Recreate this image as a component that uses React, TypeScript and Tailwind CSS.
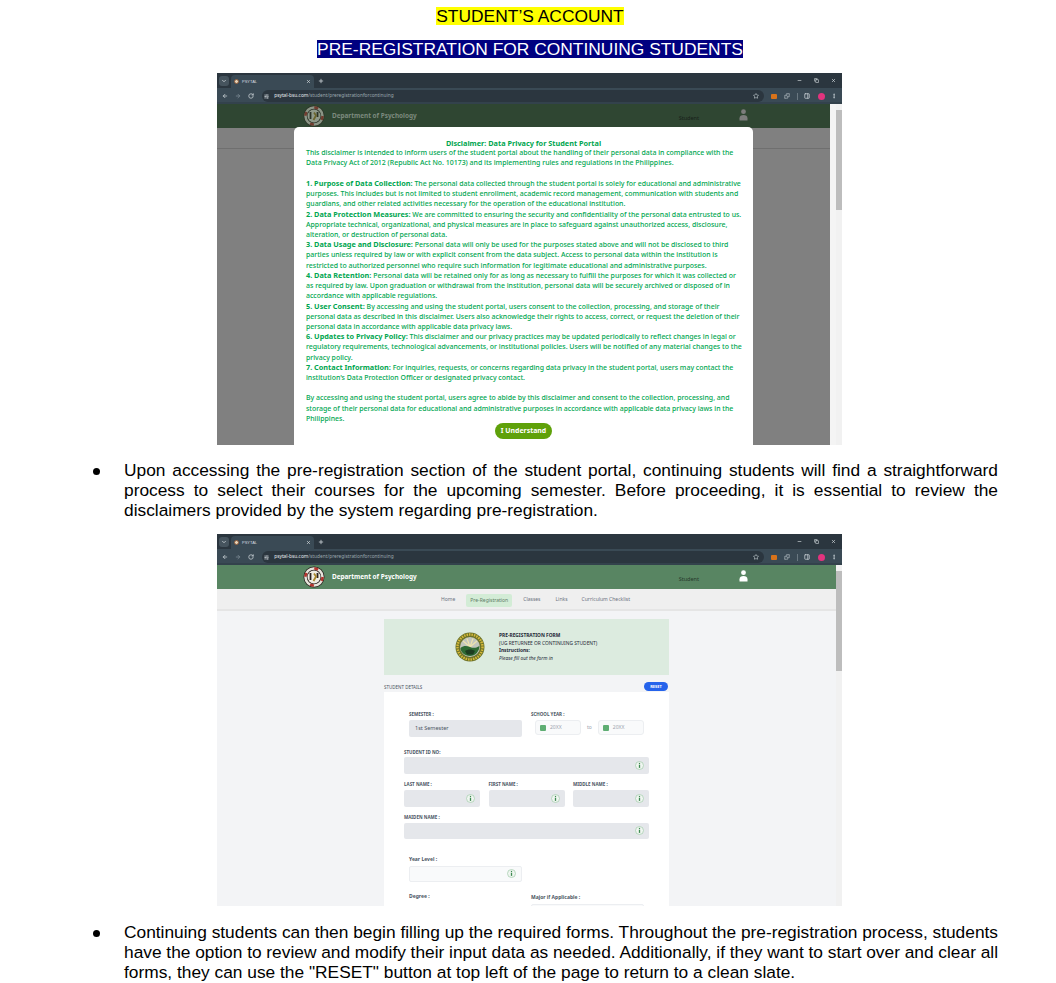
import { ArrowLeft, ArrowRight, ChevronDown, Copy, Minus, MoreVertical, Plus, RotateCw, SlidersHorizontal, Star, X, Puzzle, PanelRight } from "lucide-react"

// Small round department seal used in the site header
function DeptSeal({ dim }: { dim?: boolean }) {
  return (
    <svg width="22" height="22" viewBox="0 0 22 22" className={dim ? "opacity-50" : ""}>
      <circle cx="11" cy="11" r="10.500" fill="#2b2320" />
      <circle cx="11" cy="11" r="8.500" fill="none" stroke="#e6e3da" strokeWidth="2.500" />
      <circle cx="11" cy="11" r="8.500" fill="none" stroke="#b3332c" strokeWidth="2.500" strokeDasharray="4 9.350" />
      <circle cx="11" cy="11" r="6.500" fill="#efece2" />
      <path d="M7.500 7v7M14.500 7v5" stroke="#2b2320" strokeWidth="1.800" fill="none" />
      <path d="M11 7.500l2 3-2.500 4.500" stroke="#a8862c" strokeWidth="1.800" fill="none" />
    </svg>
  )
}

// University seal on the pre-registration banner
function UniSeal() {
  return (
    <svg width="30" height="30" viewBox="0 0 30 30">
      <circle cx="15" cy="15" r="14.500" fill="#6c7228" />
      <circle cx="15" cy="15" r="12.500" fill="none" stroke="#d6b93a" strokeWidth="2.400" strokeDasharray="1.500 1" />
      <circle cx="15" cy="15" r="10" fill="#c2c6bd" />
      <path d="M15 15L8 9M15 15L12 6.500M15 15l3-8.500M15 15l7-6" stroke="#eee3ae" strokeWidth="1.200" />
      <path d="M5.500 16c3-2.500 6-2.500 9.500-1s6 1 9.500-1c0 5-4 10-9.500 10s-9.500-4-9.500-8z" fill="#2f6b33" />
      <path d="M10 19c3-2 7-2 10 0l-2 3.500h-6z" fill="#1d3c20" />
    </svg>
  )
}

function BrowserBar() {
  return (
    <div className="shrink-0">
      <div className="h-[15px] bg-[#2b363f] flex items-center pl-[2px] pr-[6px] text-[#d7dde1]">
        <div className="w-[10px] h-[10px] rounded-[3px] bg-[#46545e] flex items-center justify-center">
          <ChevronDown size={6} strokeWidth={3} />
        </div>
        <div className="ml-[2px] h-[13px] mt-[2px] w-[83px] bg-[#3a4a55] rounded-t-[4px] flex items-center pl-[3px] pr-[3px]">
          <div className="w-[5px] h-[5px] rounded-full bg-[#e5d3b8] border border-[#8d5a3a]" />
          <span className="ml-[3px] text-[4px] flex-1">PSYTAL</span>
          <X size={5} strokeWidth={3} />
        </div>
        <Plus size={6} strokeWidth={3} className="ml-[4px]" />
        <div className="flex-1" />
        <Minus size={5} strokeWidth={3} />
        <Copy size={5} strokeWidth={3} className="ml-[12px]" />
        <X size={5} strokeWidth={3} className="ml-[12px]" />
      </div>
      <div className="h-[16px] bg-[#3a4a55] shadow-[inset_0_-2px_0_#33424c] flex items-center pl-[5px] pr-[5px] text-[#c9d1d6]">
        <ArrowLeft size={6} strokeWidth={3} />
        <ArrowRight size={6} strokeWidth={3} className="ml-[7px] text-[#7f8c95]" />
        <RotateCw size={6} strokeWidth={3} className="ml-[7px]" />
        <div className="ml-[7.700px] h-[12px] flex-1 rounded-full bg-[#2b363f] flex items-center pl-[2.500px] pr-[5px]">
          <SlidersHorizontal size={5} strokeWidth={3} />
          <span className="ml-[5px] text-[4.800px] font-['Noto_Sans',sans-serif] text-[#e8ecef]">psytal-bsu.com<span className="text-[#9aa6ae]">/student/preregistrationforcontinuing</span></span>
          <div className="flex-1" />
          <Star size={6} strokeWidth={2.500} />
        </div>
        <div className="ml-[7px] w-[6px] h-[5px] rounded-[1px] bg-[#d9731a]" />
        <Puzzle size={6} strokeWidth={2.500} className="ml-[7px]" />
        <div className="ml-[6.500px] w-px h-[7px] bg-[#6a7881]" />
        <PanelRight size={6} strokeWidth={3} className="ml-[6.500px]" />
        <div className="ml-[7.500px] w-[7px] h-[7px] rounded-full bg-[#e3337e]" />
        <MoreVertical size={6} strokeWidth={3} className="ml-[6.500px]" />
      </div>
    </div>
  )
}

function PersonIcon({ color }: { color: string }) {
  return (
    <svg width="9" height="12" viewBox="0 0 9 12" fill={color}>
      <circle cx="4.500" cy="2.700" r="2.400" />
      <path d="M0.500 11.500V9.300c0-2 1.800-3.200 4-3.200s4 1.200 4 3.200v2.200z" />
    </svg>
  )
}

function SiteHeader({ dim }: { dim?: boolean }) {
  return (
    <div className={`h-[24px] flex items-center font-['Noto_Sans',sans-serif] ${dim ? "bg-[#2f4632]" : "bg-[#588562]"}`}>
      <div className="ml-[86px]"><DeptSeal dim={dim} /></div>
      <span className={`ml-[7px] text-[6.400px] font-bold ${dim ? "text-[#7c8a7e]" : "text-white"}`}>Department of Psychology</span>
      <span className={`ml-[262px] mt-[4px] text-[5.500px] ${dim ? "text-[#17201a]" : "text-[#26382b]"}`}>Student</span>
      <div className="ml-[40px] -mt-[2px]"><PersonIcon color={dim ? "#7d7d7d" : "#ffffff"} /></div>
    </div>
  )
}

const disclaimer: { bold?: string; text: string }[] = [
  { text: "This disclaimer is intended to inform users of the student portal about the handling of their personal data in compliance with the" },
  { text: "Data Privacy Act of 2012 (Republic Act No. 10173) and its implementing rules and regulations in the Philippines." },
  { text: "\u00a0" },
  { bold: "1. Purpose of Data Collection:", text: " The personal data collected through the student portal is solely for educational and administrative" },
  { text: "purposes. This includes but is not limited to student enrollment, academic record management, communication with students and" },
  { text: "guardians, and other related activities necessary for the operation of the educational institution." },
  { bold: "2. Data Protection Measures:", text: " We are committed to ensuring the security and confidentiality of the personal data entrusted to us." },
  { text: "Appropriate technical, organizational, and physical measures are in place to safeguard against unauthorized access, disclosure," },
  { text: "alteration, or destruction of personal data." },
  { bold: "3. Data Usage and Disclosure:", text: " Personal data will only be used for the purposes stated above and will not be disclosed to third" },
  { text: "parties unless required by law or with explicit consent from the data subject. Access to personal data within the institution is" },
  { text: "restricted to authorized personnel who require such information for legitimate educational and administrative purposes." },
  { bold: "4. Data Retention:", text: " Personal data will be retained only for as long as necessary to fulfill the purposes for which it was collected or" },
  { text: "as required by law. Upon graduation or withdrawal from the institution, personal data will be securely archived or disposed of in" },
  { text: "accordance with applicable regulations." },
  { bold: "5. User Consent:", text: " By accessing and using the student portal, users consent to the collection, processing, and storage of their" },
  { text: "personal data as described in this disclaimer. Users also acknowledge their rights to access, correct, or request the deletion of their" },
  { text: "personal data in accordance with applicable data privacy laws." },
  { bold: "6. Updates to Privacy Policy:", text: " This disclaimer and our privacy practices may be updated periodically to reflect changes in legal or" },
  { text: "regulatory requirements, technological advancements, or institutional policies. Users will be notified of any material changes to the" },
  { text: "privacy policy." },
  { bold: "7. Contact Information:", text: " For inquiries, requests, or concerns regarding data privacy in the student portal, users may contact the" },
  { text: "institution's Data Protection Officer or designated privacy contact." },
  { text: "\u00a0" },
  { text: "By accessing and using the student portal, users agree to abide by this disclaimer and consent to the collection, processing, and" },
  { text: "storage of their personal data for educational and administrative purposes in accordance with applicable data privacy laws in the" },
  { text: "Philippines." },
]

function DisclaimerShot() {
  return (
    <div className="ml-[217px] w-[625px] h-[372px] flex flex-col overflow-hidden">
      <BrowserBar />
      <div className="relative flex-1 bg-[#808080] overflow-hidden">
        <SiteHeader dim />
        <div className="h-[21px] border-b border-[#6f6f6f]" />
        <div className="absolute right-0 top-0 bottom-0 w-[12px] bg-[#f4f4f4] flex justify-end">
          <div className="w-[6px] h-full bg-[#f1f1f1]">
            <div className="mt-[6px] h-[100px] bg-[#bdbdbd]" />
          </div>
        </div>
        <div className="absolute left-[77px] top-[23px] w-[459px] h-[400px] bg-white rounded-[5px] pt-[11px] pl-[12px] font-['Noto_Sans',sans-serif] text-[6.940px] leading-[10.220px] font-[500] text-[#00a650]">
          <div className="text-center text-[7.300px] font-bold pr-[12px]">Disclaimer: Data Privacy for Student Portal</div>
          {disclaimer.map((line, i) => (
            <div key={i} className="whitespace-nowrap h-[10.220px]">
              {line.bold && <b className="text-[7.300px] leading-none font-bold">{line.bold}</b>}
              {line.text}
            </div>
          ))}
          <div className="-mt-[1px] pr-[12px] flex justify-center">
            <div className="w-[57px] h-[16px] rounded-full bg-[#5fa10a] text-white font-bold flex items-center justify-center">I Understand</div>
          </div>
        </div>
      </div>
    </div>
  )
}

function InfoDot() {
  return (
    <svg width="9" height="9" viewBox="0 0 9 9" className="shrink-0">
      <circle cx="4.500" cy="4.500" r="4" fill="#f0f6f1" stroke="#a9cfb3" strokeWidth="0.800" />
      <circle cx="4.500" cy="2.400" r="0.700" fill="#3f8a52" />
      <path d="M4.500 3.700v3.200" stroke="#3f8a52" strokeWidth="1.300" />
    </svg>
  )
}

function Field({ className, filled = true }: { className?: string; filled?: boolean }) {
  return (
    <div className={`flex items-center justify-end pr-[5px] rounded-[2px] ${filled ? "bg-[#e5e7eb] h-[16.700px]" : "bg-[#f9fafb] border border-[#eceef1] h-[15.700px]"} ${className ?? ""}`}>
      <InfoDot />
    </div>
  )
}

function Label({ children, className }: { children: React.ReactNode; className?: string }) {
  return <div className={`text-[4.500px] leading-[6px] font-bold text-[#4b5563] ${className ?? ""}`}>{children}</div>
}

function YearInput() {
  return (
    <div className="w-[46px] h-[15.500px] rounded-[3px] bg-[#f9fafb] border border-[#eceef1] flex items-center pl-[4px]">
      <div className="w-[6px] h-[6px] rounded-[1px] bg-[#5fae73]" />
      <span className="ml-[4px] text-[5px] text-[#9ca3af]">20XX</span>
    </div>
  )
}

function FormShot() {
  return (
    <div className="ml-[217px] w-[625px] h-[372px] flex flex-col overflow-hidden">
      <BrowserBar />
      <div className="relative flex-1 bg-[#f3f4f6] overflow-hidden font-['Noto_Sans',sans-serif]">
        <SiteHeader />
        <div className="h-[22px] bg-[#efefef] border-b-2 border-[#e5e5e5] flex items-center pt-[2px] pl-[224px] text-[5px] text-[#6b7280]">
          <span>Home</span>
          <span className="ml-[11px] w-[46px] h-[13px] leading-[13px] text-center rounded-[2px] bg-[#d3ecd6] text-[#5f7d66]">Pre-Registration</span>
          <span className="ml-[11px]">Classes</span>
          <span className="ml-[15px]">Links</span>
          <span className="ml-[14px]">Curriculum Checklist</span>
        </div>
        <div className="absolute right-0 top-0 bottom-0 w-[6px] bg-[#f1f1f1]">
          <div className="mt-[6px] h-[100px] bg-[#bdbdbd]" />
        </div>

        <div className="ml-[167px] w-[285px] mt-[8px]">
          <div className="h-[56px] bg-[#dcebdf] flex items-center pl-[71px]">
            <UniSeal />
            <div className="ml-[14px] text-[4.850px] leading-[7.500px] text-[#1f2937]">
              <div className="font-bold">PRE-REGISTRATION FORM</div>
              <div>(UG RETURNEE OR CONTINUING STUDENT)</div>
              <div className="font-bold">Instructions:</div>
              <div className="italic">Please fill out the form in</div>
            </div>
          </div>
          <div className="h-[17px] flex items-end justify-between pr-[1px] pb-[1px]">
            <span className="text-[4.500px] text-[#4b5563]">STUDENT DETAILS</span>
            <span className="w-[24px] h-[9px] rounded-full bg-[#2563eb] text-white text-[4px] font-bold flex items-center justify-center">RESET</span>
          </div>
          <div className="bg-white h-[240px] pt-[19.300px] px-[20px]">
            <div className="flex pl-[5px]">
              <div className="w-[113px]">
                <Label>SEMESTER :</Label>
                <div className="mt-[2.700px] h-[16.700px] bg-[#e5e7eb] rounded-[2px] flex items-center pl-[6px] text-[5.500px] text-[#4b5563]">1st Semester</div>
              </div>
              <div className="ml-[9px]">
                <Label>SCHOOL YEAR :</Label>
                <div className="mt-[2.700px] ml-[4px] flex items-center">
                  <YearInput />
                  <span className="mx-[6px] text-[5px] text-[#9ca3af]">to</span>
                  <YearInput />
                </div>
              </div>
            </div>
            <Label className="mt-[12px]">STUDENT ID NO:</Label>
            <Field className="mt-[2.600px]" />
            <div className="mt-[7.300px] grid grid-cols-3 gap-x-[8.500px]">
              <div><Label>LAST NAME :</Label><Field className="mt-[2.700px]" /></div>
              <div><Label>FIRST NAME :</Label><Field className="mt-[2.700px]" /></div>
              <div><Label>MIDDLE NAME :</Label><Field className="mt-[2.700px]" /></div>
            </div>
            <Label className="mt-[7.300px]">MAIDEN NAME :</Label>
            <Field className="mt-[2.700px]" />
            <div className="pl-[5px] mt-[16.700px]">
              <div className="text-[5px] leading-[6px] font-bold text-[#4b5563]">Year Level :</div>
              <Field filled={false} className="mt-[4px] w-[113px]" />
              <div className="mt-[11px] flex">
                <div className="w-[122px] text-[5px] leading-[6px] font-bold text-[#4b5563]">Degree :</div>
                <div className="mt-[1px] text-[5px] leading-[6px] font-bold text-[#4b5563]">Major if Applicable :</div>
              </div>
              <div className="flex items-start">
                <Field filled={false} className="mt-[6px] w-[113px]" />
                <Field filled={false} className="mt-[4.500px] ml-[9px] w-[113px]" />
              </div>
            </div>
          </div>
        </div>
      </div>
    </div>
  )
}

function Bullet({ children }: { children: React.ReactNode }) {
  return (
    <div className="flex pl-[93px] pr-[58px]">
      <div className="w-[31px] shrink-0 pt-[8px]">
        <div className="w-[6.500px] h-[6.500px] rounded-full bg-black" />
      </div>
      <div className="flex-1 text-justify text-[17.330px] leading-[20px]">{children}</div>
    </div>
  )
}

export default function App() {
  return (
    <div className="w-[1056px] h-[983px] overflow-hidden bg-white text-black font-['Liberation_Sans',Arial,sans-serif]">
      <div className="pl-[4px] pt-[7px] flex flex-col items-center text-[17.400px] leading-[18px]">
        <span className="bg-[#ffff00]">STUDENT’S ACCOUNT</span>
        <span className="mt-[15px] bg-[#000080] text-white">PRE-REGISTRATION FOR CONTINUING STUDENTS</span>
      </div>
      <div className="mt-[15px]"><DisclaimerShot /></div>
      <div className="mt-[15px]">
        <Bullet>
          <p>Upon accessing the pre-registration section of the student portal, continuing students will find a straightforward process to select their courses for the upcoming semester. Before proceeding, it is essential to review the disclaimers provided by the system regarding pre-registration.</p>
        </Bullet>
      </div>
      <div className="mt-[14px]"><FormShot /></div>
      <div className="mt-[16px]">
        <Bullet>
          {/* Word squeezes the spaces on these two lines, so they are set line by line */}
          <p className="[text-align-last:justify] [word-spacing:-3px]">Continuing students can then begin filling up the required forms. Throughout the pre-registration process, students</p>
          <p className="[text-align-last:justify] [word-spacing:-3px]">have the option to review and modify their input data as needed. Additionally, if they want to start over and clear all</p>
          <p>forms, they can use the "RESET" button at top left of the page to return to a clean slate.</p>
        </Bullet>
      </div>
    </div>
  )
}
